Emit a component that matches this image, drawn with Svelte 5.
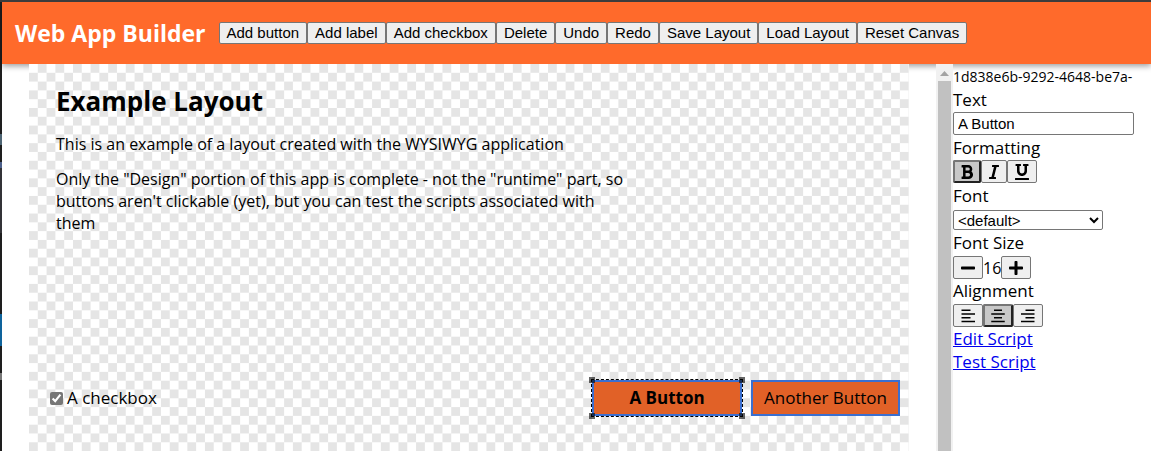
<script>
  const actions = ['Add button', 'Add label', 'Add checkbox', 'Delete', 'Undo', 'Redo', 'Save Layout', 'Load Layout', 'Reset Canvas'];
  const formats = [
    { name: 'Bold', on: true, w: 384, d: 'M333.49 238a122 122 0 0 0 27-65.21C367.87 96.49 308 32 233.42 32H34a16 16 0 0 0-16 16v48a16 16 0 0 0 16 16h31.87v288H34a16 16 0 0 0-16 16v48a16 16 0 0 0 16 16h209.32c70.8 0 134.14-51.75 141-122.4 4.74-48.45-16.39-92.06-50.83-119.6zM145.66 112h87.76a48 48 0 0 1 0 96h-87.76zm87.76 288h-87.76V288h87.76a56 56 0 0 1 0 112z' },
    { name: 'Italic', on: false, w: 320, d: 'M320 48v32a16 16 0 0 1-16 16h-62.76l-80 320H208a16 16 0 0 1 16 16v32a16 16 0 0 1-16 16H16a16 16 0 0 1-16-16v-32a16 16 0 0 1 16-16h62.76l80-320H112a16 16 0 0 1-16-16V48a16 16 0 0 1 16-16h192a16 16 0 0 1 16 16z' },
    { name: 'Underline', on: false, w: 448, d: 'M32 64h32v160c0 88.22 71.78 160 160 160s160-71.78 160-160V64h32a16 16 0 0 0 16-16V16a16 16 0 0 0-16-16H272a16 16 0 0 0-16 16v32a16 16 0 0 0 16 16h32v160a80 80 0 0 1-160 0V64h32a16 16 0 0 0 16-16V16a16 16 0 0 0-16-16H32a16 16 0 0 0-16 16v32a16 16 0 0 0 16 16zm400 384H16a16 16 0 0 0-16 16v32a16 16 0 0 0 16 16h416a16 16 0 0 0 16-16v-32a16 16 0 0 0-16-16z' }
  ];
  const aligns = [
    { name: 'Align left', on: false, w: 448, d: 'M16 48h288v44H16zM16 168h432v44H16zM16 288h288v44H16zM16 408h432v44H16z' },
    { name: 'Align center', on: true, w: 448, d: 'M96 48h256v44H96zM8 168h432v44H8zM96 288h256v44H96zM8 408h432v44H8z' },
    { name: 'Align right', on: false, w: 448, d: 'M144 48h288v44H144zM0 168h432v44H0zM144 288h288v44H144zM0 408h432v44H0z' }
  ];
  const minus = 'M416 208H32c-17.67 0-32 14.33-32 32v32c0 17.67 14.33 32 32 32h384c17.67 0 32-14.33 32-32v-32c0-17.67-14.33-32-32-32z';
  const plus = 'M416 208H272V64c0-17.67-14.33-32-32-32h-32c-17.67 0-32 14.33-32 32v144H32c-17.67 0-32 14.33-32 32v32c0 17.67 14.33 32 32 32h144v144c0 17.67 14.33 32 32 32h32c17.67 0 32-14.33 32-32V304h144c17.67 0 32-14.33 32-32v-32c0-17.67-14.33-32-32-32z';
  let text = $state('A Button');
  let checked = $state(true);
  let size = $state(16);
</script>

{#snippet icon(w, d)}
  <svg width={w / 32} height="16" viewBox="0 0 {w} 512"><path {d} /></svg>
{/snippet}

<div class="app">
  <header>
    <h1>Web App Builder</h1>
    <div class="toolbar">
      {#each actions as a}<button>{a}</button>{/each}
    </div>
  </header>
  <div class="body">
    <main>
      <div class="canvas">
        <h2 class="item title">Example Layout</h2>
        <p class="item intro">This is an example of a layout created with the WYSIWYG application</p>
        <p class="item note">Only the "Design" portion of this app is complete - not the "runtime" part, so buttons aren't clickable (yet), but you can test the scripts associated with them</p>
        <label class="item check"><input type="checkbox" bind:checked />A checkbox</label>
        <div class="item first">
          <button class="widget bold">{text}</button>
          <i class="h nw"></i><i class="h ne"></i><i class="h sw"></i><i class="h se"></i>
        </div>
        <button class="item widget second">Another Button</button>
      </div>
    </main>
    <div class="scroll" aria-hidden="true"><svg width="9" height="5" viewBox="0 0 9 5"><path d="M4.500 0L9 5H0Z" fill="#a3a3a3" /></svg><div class="thumb"></div></div>
    <aside>
      <div class="id">1d838e6b-9292-4648-be7a-</div>
      <label for="text">Text</label>
      <div class="row top"><input id="text" type="text" bind:value={text} /></div>
      <div class="label">Formatting</div>
      <div class="row top">
        {#each formats as f}<button class:on={f.on} aria-label={f.name}>{@render icon(f.w, f.d)}</button>{/each}
      </div>
      <label for="font">Font</label>
      <div class="row font"><select id="font"><option>&lt;default&gt;</option></select></div>
      <div class="label">Font Size</div>
      <div class="row">
        <button aria-label="Smaller" onclick={() => size--}>{@render icon(448, minus)}</button><span class="size">{size}</span><button aria-label="Larger" onclick={() => size++}>{@render icon(448, plus)}</button>
      </div>
      <div class="label">Alignment</div>
      <div class="row">
        {#each aligns as a}<button class:on={a.on} aria-label={a.name}>{@render icon(a.w, a.d)}</button>{/each}
      </div>
      <a href="#edit">Edit Script</a>
      <a href="#test">Test Script</a>
    </aside>
  </div>
</div>

<style>
  :global(body) { margin: 0; overflow: hidden; }
  * { box-sizing: border-box; }
  .app {
    height: 100vh; display: flex; flex-direction: column; overflow: hidden;
    border-top: 2px solid #3c3c3c; padding-left: 2px;
    background:
      linear-gradient(#1e1e1e 132px, #4d6473 132px 143px, #1e1e1e 143px 160px, #4b5f8a 160px 166px, #333337 166px 231px, #1e1e1e 231px 312px, #0e639c 312px 344px, #1e1e1e 344px 371px, #777 371px 378px, #1e1e1e 378px) 0 0 / 2px 100% no-repeat,
      #fff;
    font: 16px/22px "Open Sans", "Noto Sans", sans-serif; color: #000;
  }
  h1, h2, p { margin: 0; }
  header {
    flex: none; display: flex; align-items: center; gap: 13px; height: 62px; padding-left: 13px;
    background: #ff6a2b; box-shadow: 0 2px 6px rgba(0, 0, 0, .4);
  }
  h1 { font-size: 23px; line-height: 32px; font-weight: 700; color: #fff; white-space: nowrap; }
  .toolbar { display: flex; }
  .toolbar button {
    height: 22px; padding: 0 7px; border: 1px solid #767676; border-radius: 2px;
    background: #efefef; color: #000; font: 15px/20px "Liberation Sans", sans-serif; white-space: nowrap;
  }
  .body { flex: 1; display: flex; min-height: 0; }
  main { flex: 1; min-width: 0; padding: 0 27px; }
  .canvas {
    position: relative; height: 100%;
    background: repeating-conic-gradient(#e5e5e5 0 25%, #fff 0 50%) 0 0 / 1.1rem 1.1rem;
  }
  .item { position: absolute; }
  .title { left: 27px; top: 19px; font-size: 26px; line-height: 36px; font-weight: 700; white-space: nowrap; }
  .intro { left: 27px; top: 69px; white-space: nowrap; }
  .note { left: 27px; top: 104px; width: 570px; }
  .check { left: 21px; top: 323px; display: flex; align-items: center; gap: 4px; font-size: 17px; }
  .check input { margin: 0; width: 13px; height: 13px; accent-color: #767676; }
  .first { right: 167px; bottom: 35px; width: 150px; height: 36px; }
  .first .widget { width: 100%; height: 100%; }
  .widget { padding: 0; border: 2px solid #3a6fd0; background: #e16127; font: inherit; font-size: 17px; color: #000; }
  .widget.bold { font-weight: 700; }
  .second { right: 9px; bottom: 35px; width: 149px; height: 36px; }
  .first::after { content: ""; position: absolute; inset: -1px; border: 1px dashed #000; pointer-events: none; }
  .h { position: absolute; width: 6px; height: 6px; background: rgba(0, 0, 0, .6); }
  .nw { left: -3px; top: -3px; } .ne { right: -3px; top: -3px; }
  .sw { left: -3px; bottom: -3px; } .se { right: -3px; bottom: -3px; }
  .scroll { width: 17px; flex: none; background: #f1f1f1; display: flex; flex-direction: column; align-items: center; padding-top: 7px; gap: 5px; }
  .thumb { width: 13px; flex: 1; background: #c1c1c1; }
  aside { width: 198px; flex: none; padding-top: 2px; font-size: 17px; }
  aside label, aside .label, aside a { display: block; height: 23px; line-height: 22px; }
  .id { font-size: 14px; height: 23px; line-height: 22px; white-space: nowrap; }
  .row { display: flex; align-items: center; height: 25px; }
  .row.top { align-items: flex-start; }
  .row.font { height: 24px; }
  .row button { height: 23px; padding: 0 7px; border: 1px solid #767676; border-radius: 2px; background: #efefef; display: flex; align-items: center; }
  .row button.on { padding: 0 6px; background: #c8c8c8; border: 2px solid; border-color: #767676 #222 #222 #767676; }
  .row input { width: 181px; height: 23px; padding: 0 4px; border: 1px solid #767676; border-radius: 2px; font: 15px "Liberation Sans", sans-serif; }
  .row select { width: 150px; height: 20px; border: 1px solid #767676; border-radius: 2px; background: #fff; font: 15px "Liberation Sans", sans-serif; padding: 0; }
  .row svg { display: block; }
  .size { font-size: 16px; }
  aside a { width: fit-content; color: #0000ee; }
</style>
